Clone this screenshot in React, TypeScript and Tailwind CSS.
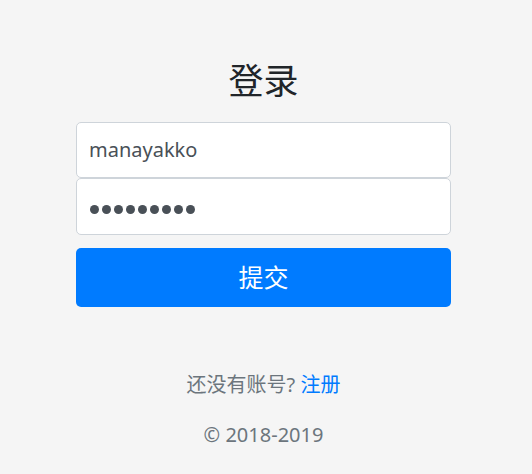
import React from "react";

const FONT = '"Noto Sans", "Open Sans", "Noto Sans CJK SC", sans-serif';

export default function App() {
  return (
    <div
      className="min-h-[474px] w-full bg-[#f5f5f5]"
      style={{ fontFamily: FONT }}
    >
      <div className="flex w-[527px] flex-col items-center pt-[60px]">
        <form className="flex w-[375px] flex-col" onSubmit={(e) => e.preventDefault()}>
          <h1 className="mb-[20px] text-center text-[35px] font-normal leading-[42px] text-[#212529]">
            登录
          </h1>
          <div className="flex h-[56px] items-center rounded-[5px] border border-[#ced4da] bg-white px-[12px] text-[20px] text-[#495057]">
            manayakko
          </div>
          <div className="flex h-[57px] items-center rounded-[5px] border border-[#ced4da] bg-white px-[13px] pt-[6px]">
            <div className="flex gap-[3px]">
              {Array.from({ length: 9 }).map((_, i) => (
                <span key={i} className="block h-[9px] w-[9px] rounded-full bg-[#495057]" />
              ))}
            </div>
          </div>
          <button
            type="submit"
            className="mt-[13px] flex h-[59px] items-center justify-center rounded-[5px] bg-[#007bff] text-[25px] text-white"
          >
            提交
          </button>
        </form>
        <p className="mt-[63px] text-[20px] leading-[30px] text-[#6c757d]">
          还没有账号? <a className="text-[#007bff]" href="#">注册</a>
        </p>
        <p className="mt-[20px] text-[20px] leading-[30px] text-[#6c757d]">© 2018-2019</p>
      </div>
    </div>
  );
}
